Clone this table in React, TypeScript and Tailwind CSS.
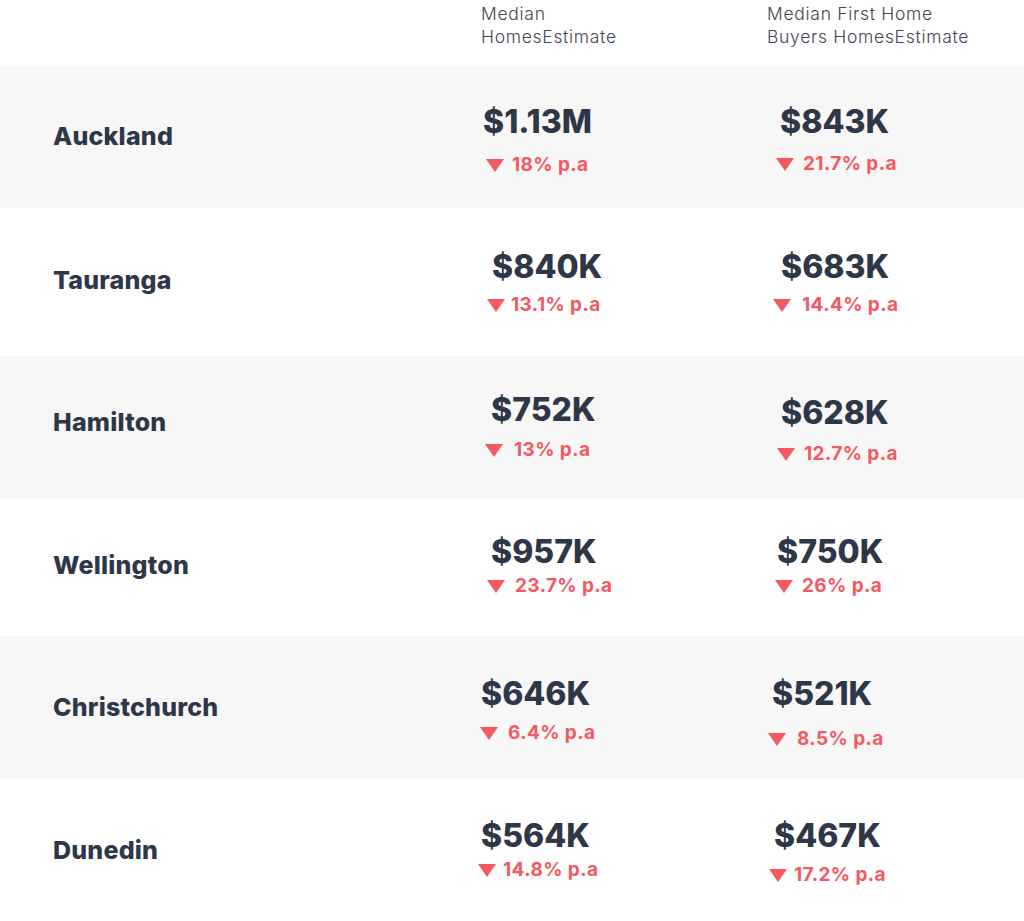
const font = { fontFamily: "Inter, Lato, 'Noto Sans', sans-serif" };

type Cell = {
  value: string;
  change: string;
  pad: string; // top padding of the cell
  valueMl: string;
  changeMl: string;
  changeMt: string;
  gap: string;
};

type Row = {
  city: string;
  h: string;
  bg: string;
  nameCls: string;
  cells: [Cell, Cell];
};

const rows: Row[] = [
  {
    city: "Auckland",
    h: "h-[142px]",
    bg: "bg-[#f7f7f7]",
    nameCls: "",
    cells: [
      { value: "$1.13M", change: "18% p.a", pad: "pt-[36px]", valueMl: "ml-[13px]", changeMl: "ml-[16px]", changeMt: "mt-[11px]", gap: "gap-[8px]" },
      { value: "$843K", change: "21.7% p.a", pad: "pt-[36px]", valueMl: "ml-[20px]", changeMl: "ml-[16px]", changeMt: "mt-[10px]", gap: "gap-[9px]" },
    ],
  },
  {
    city: "Tauranga",
    h: "h-[148px]",
    bg: "bg-white",
    nameCls: "-mt-[2px]",
    cells: [
      { value: "$840K", change: "13.1% p.a", pad: "pt-[39px]", valueMl: "ml-[22px]", changeMl: "ml-[17px]", changeMt: "mt-[6px]", gap: "gap-[6px]" },
      { value: "$683K", change: "14.4% p.a", pad: "pt-[39px]", valueMl: "ml-[21px]", changeMl: "ml-[13px]", changeMt: "mt-[6px]", gap: "gap-[11px]" },
    ],
  },
  {
    city: "Hamilton",
    h: "h-[143px]",
    bg: "bg-[#f7f7f7]",
    nameCls: "-mt-[9px]",
    cells: [
      { value: "$752K", change: "13% p.a", pad: "pt-[34px]", valueMl: "ml-[21px]", changeMl: "ml-[15px]", changeMt: "mt-[8px]", gap: "gap-[11px]" },
      { value: "$628K", change: "12.7% p.a", pad: "pt-[37px]", valueMl: "ml-[21px]", changeMl: "ml-[17px]", changeMt: "mt-[9px]", gap: "gap-[9px]" },
    ],
  },
  {
    city: "Wellington",
    h: "h-[137px]",
    bg: "bg-white",
    nameCls: "-mt-[4px]",
    cells: [
      { value: "$957K", change: "23.7% p.a", pad: "pt-[33px]", valueMl: "ml-[21px]", changeMl: "ml-[17px]", changeMt: "mt-[2px]", gap: "gap-[10px]" },
      { value: "$750K", change: "26% p.a", pad: "pt-[33px]", valueMl: "ml-[17px]", changeMl: "ml-[15px]", changeMt: "mt-[2px]", gap: "gap-[9px]" },
    ],
  },
  {
    city: "Christchurch",
    h: "h-[143px]",
    bg: "bg-[#f7f7f7]",
    nameCls: "",
    cells: [
      { value: "$646K", change: "6.4% p.a", pad: "pt-[38px]", valueMl: "ml-[11px]", changeMl: "ml-[10px]", changeMt: "mt-[7px]", gap: "gap-[10px]" },
      { value: "$521K", change: "8.5% p.a", pad: "pt-[38px]", valueMl: "ml-[12px]", changeMl: "ml-[8px]", changeMt: "mt-[13px]", gap: "gap-[11px]" },
    ],
  },
  {
    city: "Dunedin",
    h: "h-[142px]",
    bg: "bg-white",
    nameCls: "mt-[2px]",
    cells: [
      { value: "$564K", change: "14.8% p.a", pad: "pt-[37px]", valueMl: "ml-[11px]", changeMl: "ml-[8px]", changeMt: "mt-[2px]", gap: "gap-[7px]" },
      { value: "$467K", change: "17.2% p.a", pad: "pt-[37px]", valueMl: "ml-[14px]", changeMl: "ml-[9px]", changeMt: "mt-[7px]", gap: "gap-[7px]" },
    ],
  },
];

function DownArrow() {
  return (
    <svg width="18" height="13" viewBox="0 0 18 13" className="shrink-0">
      <polygon points="0,0 18,0 9,13" fill="#f5585f" />
    </svg>
  );
}

function ValueCell({ cell }: { cell: Cell }) {
  return (
    <div className={`flex flex-col items-start ${cell.pad}`}>
      <span className={`text-[32px] leading-[40px] font-extrabold text-[#2d3748] ${cell.valueMl}`}>
        {cell.value}
      </span>
      <span className={`flex items-center leading-[24px] ${cell.changeMl} ${cell.changeMt} ${cell.gap}`}>
        <DownArrow />
        <span className="text-[19px] font-bold tracking-[0.4px] text-[#f5585f]">{cell.change}</span>
      </span>
    </div>
  );
}

export default function App() {
  return (
    <div className="w-[1024px] min-h-[921px] bg-white" style={font}>
      <div className="grid h-[66px] grid-cols-[470px_290px_1fr] pt-[2px] text-[17.5px] leading-[23px] font-light tracking-[0.7px] text-[#3f4654]">
        <div />
        <div className="ml-[11px]">
          Median
          <br />
          HomesEstimate
        </div>
        <div className="ml-[7px]">
          Median First Home
          <br />
          Buyers HomesEstimate
        </div>
      </div>
      {rows.map((row) => (
        <div key={row.city} className={`grid grid-cols-[470px_290px_1fr] ${row.h} ${row.bg}`}>
          <div className="flex items-center pl-[53px]">
            <span className={`text-[25px] font-extrabold tracking-[0.2px] text-[#2d3748] ${row.nameCls}`}>
              {row.city}
            </span>
          </div>
          <ValueCell cell={row.cells[0]} />
          <ValueCell cell={row.cells[1]} />
        </div>
      ))}
    </div>
  );
}
